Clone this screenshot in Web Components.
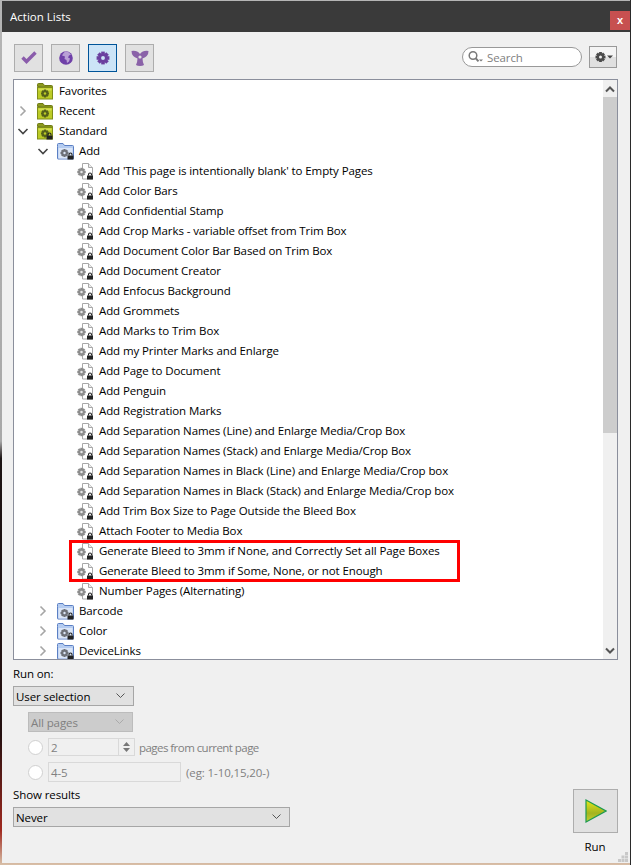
<!DOCTYPE html>
<html>
<head>
<meta charset="utf-8">
<title>Action Lists</title>
<style>
  html, body { margin: 0; height: 865px; overflow: hidden; }
  body {
    font: 11.5px "Open Sans", "Noto Sans", sans-serif;
    letter-spacing: -0.1px;
    background:
      linear-gradient(#2a2a2a, #2a2a2a) right top / 1px 100% no-repeat,
      linear-gradient(#b5b5b5 0, #a8a8a8 51%, #1c1414 53%, #241010 85%, #a02a20 96%, #d8c0a8 100%);
  }
</style>
</head>
<body>
<al-window>
  <al-titlebar slot="title">Action Lists</al-titlebar>
  <al-toolbar slot="toolbar"></al-toolbar>
  <al-tree slot="tree">
    <al-row depth="0" icon="olive">Favorites</al-row>
    <al-row depth="0" icon="olive" arrow="closed">Recent</al-row>
    <al-row depth="0" icon="olive-lock" arrow="open">Standard</al-row>
    <al-row depth="1" icon="blue" arrow="open">Add</al-row>
    <al-row depth="2" icon="page">Add 'This page is intentionally blank' to Empty Pages</al-row>
    <al-row depth="2" icon="page">Add Color Bars</al-row>
    <al-row depth="2" icon="page">Add Confidential Stamp</al-row>
    <al-row depth="2" icon="page">Add Crop Marks - variable offset from Trim Box</al-row>
    <al-row depth="2" icon="page">Add Document Color Bar Based on Trim Box</al-row>
    <al-row depth="2" icon="page">Add Document Creator</al-row>
    <al-row depth="2" icon="page">Add Enfocus Background</al-row>
    <al-row depth="2" icon="page">Add Grommets</al-row>
    <al-row depth="2" icon="page">Add Marks to Trim Box</al-row>
    <al-row depth="2" icon="page">Add my Printer Marks and Enlarge</al-row>
    <al-row depth="2" icon="page">Add Page to Document</al-row>
    <al-row depth="2" icon="page">Add Penguin</al-row>
    <al-row depth="2" icon="page">Add Registration Marks</al-row>
    <al-row depth="2" icon="page">Add Separation Names (Line) and Enlarge Media/Crop Box</al-row>
    <al-row depth="2" icon="page">Add Separation Names (Stack) and Enlarge Media/Crop Box</al-row>
    <al-row depth="2" icon="page">Add Separation Names in Black (Line) and Enlarge Media/Crop box</al-row>
    <al-row depth="2" icon="page">Add Separation Names in Black (Stack) and Enlarge Media/Crop box</al-row>
    <al-row depth="2" icon="page">Add Trim Box Size to Page Outside the Bleed Box</al-row>
    <al-row depth="2" icon="page">Attach Footer to Media Box</al-row>
    <al-highlight>
      <al-row depth="2" icon="page">Generate Bleed to 3mm if None, and Correctly Set all Page Boxes</al-row>
      <al-row depth="2" icon="page">Generate Bleed to 3mm if Some, None, or not Enough</al-row>
    </al-highlight>
    <al-row depth="2" icon="page">Number Pages (Alternating)</al-row>
    <al-row depth="1" icon="blue" arrow="closed">Barcode</al-row>
    <al-row depth="1" icon="blue" arrow="closed">Color</al-row>
    <al-row depth="1" icon="blue" arrow="closed">DeviceLinks</al-row>
  </al-tree>
  <al-runpanel slot="panel">
    <al-select slot="run-on" w="121">User selection</al-select>
    <al-select slot="pages" w="105" disabled>All pages</al-select>
    <al-select slot="results" w="277">Never</al-select>
  </al-runpanel>
</al-window>

<script>
// little svg helpers, <use> does not cross shadow roots so we just build strings
function gear(cx, cy, r, color, hole) {
  let teeth = '';
  for (let i = 0; i < 8; i++) {
    teeth += `<rect x="${cx - r * 0.28}" y="${cy - r}" width="${r * 0.56}" height="${r * 0.5}" fill="${color}" transform="rotate(${i * 45} ${cx} ${cy})"/>`;
  }
  return `${teeth}<circle cx="${cx}" cy="${cy}" r="${r * 0.72}" fill="${color}"/><circle cx="${cx}" cy="${cy}" r="${r * 0.3}" fill="${hole}"/>`;
}
function lock(x, y) {
  return `<path d="M${x + 1.5} ${y + 3}v-1a1.5 1.5 0 0 1 3 0v1" fill="none" stroke="#222" stroke-width="1.100"/><rect x="${x}" y="${y + 3}" width="6" height="4" fill="#222"/>`;
}
function svg(w, h, body) {
  return `<svg xmlns="http://www.w3.org/2000/svg" width="${w}" height="${h}" viewBox="0 0 ${w} ${h}" style="display:block">${body}</svg>`;
}
const chevron = (dir, color) => svg(12, 12, dir === 'open'
  ? `<path d="M1.500 4l4.500 4.500L10.500 4" fill="none" stroke="${color}" stroke-width="1.600"/>`
  : `<path d="M3.500 1.500L8 6l-4.500 4.500" fill="none" stroke="${color}" stroke-width="1.600"/>`);

const oliveFolder = locked => svg(16, 17,
  `<path d="M.5 3.500v-2q0-1 1-1h4.500l1.500 2h7q1 0 1 1v1z" fill="#8c9a1c" stroke="#6e7a14"/>
   <rect x=".5" y="4.500" width="15" height="11.500" fill="#bccb26" stroke="#7f8d18"/>
   <rect x="1.500" y="5.500" width="13" height="2" fill="#d4df52"/>` +
  gear(8, 10.5, 4, '#55601a', '#bccb26') + (locked ? lock(9.5, 9.5) : ''));

const blueFolder = svg(17, 17,
  `<path d="M.5 3.500v-2q0-1 1-1h4.500l1.500 2h8q1 0 1 1v12q0 .5-.5.5H1q-.5 0-.5-.5z" fill="#b5ccf0" stroke="#5a7fc4"/>
   <rect x="1.500" y="5" width="14" height="10.500" fill="#dbe6f8"/>` +
  gear(7.5, 10, 4, '#6d7078', '#dbe6f8') + lock(10.5, 9.5));

const pageIcon = svg(17, 17,
  `<path d="M5.500 .5h6l4 4v11.500h-10z" fill="#fff" stroke="#a8a8a8"/><path d="M11.500 .5v4h4" fill="#eee" stroke="#a8a8a8"/>` +
  gear(4.5, 9, 4.2, '#8c8c8c', '#e8e8e8') + lock(10, 9.5));

const rowIcons = { olive: oliveFolder(false), 'olive-lock': oliveFolder(true), blue: blueFolder, page: pageIcon };

class AlWindow extends HTMLElement {
  constructor() {
    super();
    this.attachShadow({ mode: 'open' }).innerHTML = `
      <style>
        :host { display: flex; flex-direction: column; height: 862px; margin: 1px 1px 2px 2px; background: #f0f0f0; position: relative; }
        .grip { position: absolute; right: 2px; bottom: 1px; }
      </style>
      <slot name="title"></slot>
      <slot name="toolbar"></slot>
      <slot name="tree"></slot>
      <slot name="panel"></slot>
      <div class="grip">${svg(10, 10, '<path d="M7 0h3v3H7zM3.500 3.500h3v3h-3zM7 3.500h3v3H7zM0 7h3v3H0zM3.500 7h3v3h-3zM7 7h3v3H7z" fill="#c8c8c8"/>')}</div>`;
  }
}

class AlTitlebar extends HTMLElement {
  constructor() {
    super();
    this.attachShadow({ mode: 'open' }).innerHTML = `
      <style>
        :host { display: flex; align-items: center; justify-content: space-between; height: 31px; background: #3a3a3a; color: #fff; padding-left: 8px; flex: none; position: relative; letter-spacing: 0; }
        .close { width: 20px; height: 19px; margin: 7px 0 0; background: #c75050; color: #fff; font: bold 11px "Liberation Sans", sans-serif; display: flex; align-items: center; justify-content: center; }
        .text { margin-top: -1px; }
      </style>
      <span class="text"><slot></slot></span>
      <div class="close">x</div>`;
  }
}

class AlToolbar extends HTMLElement {
  constructor() {
    super();
    const check = svg(18, 18, '<path d="M2.500 8.500l4 4 9-9" fill="none" stroke="#8a5cab" stroke-width="3.400"/>');
    const globe = svg(18, 18, `<circle cx="9" cy="9" r="6.800" fill="#6f40a8"/><path d="M9 2.500q3 0 5 3l-2 1-1 2 2 1-1 3-2 1.500-.5-3-2-1 .5-2.500-3-1q2-4 4.500-4.500z" fill="#b9a0d6"/>`);
    const cog = svg(18, 18, gear(9, 9, 6.400, '#6b3f9f', '#cce4f7'));
    const fan = svg(20, 18, '<path d="M1.500 2q5.500-1 8.500 3 3-4 8.500-3 0 5.500-6 7.500 0 3 1.500 6.500-1.500 1-4 1t-4-1q1.500-3.500 1.500-6.500-6-2-6-7.500z" fill="#8a62a8"/><circle cx="10" cy="8" r="1.600" fill="#e1e1e1"/>');
    this.attachShadow({ mode: 'open' }).innerHTML = `
      <style>
        :host { display: flex; align-items: flex-start; height: 47px; box-sizing: border-box; padding: 12px 13px 0 12px; flex: none; }
        .tool { width: 29px; height: 28px; box-sizing: border-box; border: 1px solid #adadad; background: #e1e1e1; display: flex; align-items: center; justify-content: center; margin-right: 8px; }
        .on { background: #cce4f7; border-color: #005499; }
        .search { margin-left: auto; margin-top: 3px; width: 120px; height: 20px; box-sizing: border-box; border: 1px solid #999; border-radius: 10px; background: #fff; display: flex; align-items: center; padding-left: 5px; color: #808080; }
        .search span { margin-left: 4px; }
        .menu { width: 28px; height: 22px; box-sizing: border-box; margin: 2px 0 0 7px; border: 1px solid #999; background: linear-gradient(#f4f4f4 50%, #e0e0e0 50%); display: flex; align-items: center; padding-left: 5px; gap: 1px; }
      </style>
      <div class="tool">${check}</div>
      <div class="tool">${globe}</div>
      <div class="tool on">${cog}</div>
      <div class="tool">${fan}</div>
      <div class="search">
        ${svg(15, 14, '<circle cx="5" cy="5.500" r="3.800" fill="none" stroke="#7a7a7a" stroke-width="1.500"/><path d="M7.800 8.300l2.700 3" stroke="#7a7a7a" stroke-width="2"/><path d="M11 9.500h4l-2 2z" fill="#7a7a7a"/>')}
        <span>Search</span>
      </div>
      <div class="menu">
        ${svg(11, 12, gear(5.5, 6, 5, '#4a4a4a', '#eee'))}
        ${svg(6, 4, '<path d="M0 .5h6l-3 3z" fill="#444"/>')}
      </div>`;
  }
}

class AlTree extends HTMLElement {
  constructor() {
    super();
    this.attachShadow({ mode: 'open' }).innerHTML = `
      <style>
        :host { display: flex; height: 581px; box-sizing: border-box; margin: 0 12px 0 11px; border: 1px solid #8b8f9c; background: #fff; flex: none; }
        .rows { flex: 1; padding-top: 1px; overflow: hidden; min-width: 0; }
        .bar { width: 14px; margin-left: auto; background: #f0f0f0; display: flex; flex-direction: column; flex: none; }
        .btn { height: 17px; display: flex; align-items: center; justify-content: center; flex: none; }
        .thumb { height: 336px; background: #cdcdcd; flex: none; }
        .track { flex: 1; }
      </style>
      <div class="rows"><slot></slot></div>
      <div class="bar">
        <div class="btn">${svg(10, 8, '<path d="M1 6.500l4-4 4 4" fill="none" stroke="#555" stroke-width="2"/>')}</div>
        <div class="thumb"></div>
        <div class="track"></div>
        <div class="btn">${svg(10, 8, '<path d="M1 1.500l4 4 4-4" fill="none" stroke="#555" stroke-width="2"/>')}</div>
      </div>`;
  }
}

class AlRow extends HTMLElement {
  constructor() {
    super();
    this.attachShadow({ mode: 'open' });
  }
  connectedCallback() {
    const depth = +this.getAttribute('depth') || 0;
    const arrow = this.getAttribute('arrow');
    const arrowSvg = arrow ? chevron(arrow, arrow === 'open' ? '#444' : '#a6a6a6') : '';
    this.shadowRoot.innerHTML = `
      <style>
        :host { display: flex; align-items: center; height: 20px; white-space: nowrap; color: #000; }
        .arrow { width: 12px; height: 12px; flex: none; margin-left: ${3 + depth * 20}px; }
        .icon { width: 17px; height: 17px; flex: none; margin-left: 8px; }
        .label { margin-left: 5px; margin-top: -1px; }
      </style>
      <div class="arrow">${arrowSvg}</div>
      <div class="icon">${rowIcons[this.getAttribute('icon')] || ''}</div>
      <span class="label"><slot></slot></span>`;
  }
}

// red marker somebody drew around the two rows
class AlHighlight extends HTMLElement {
  constructor() {
    super();
    this.attachShadow({ mode: 'open' }).innerHTML = `
      <style>
        :host { display: block; position: relative; }
        .box { position: absolute; left: 55px; top: -1px; width: 391px; height: 42px; box-sizing: border-box; border: 3px solid #f00; pointer-events: none; }
      </style>
      <slot></slot>
      <div class="box"></div>`;
  }
}

class AlSelect extends HTMLElement {
  constructor() {
    super();
    this.attachShadow({ mode: 'open' });
  }
  connectedCallback() {
    const off = this.hasAttribute('disabled');
    this.shadowRoot.innerHTML = `
      <style>
        :host { display: flex; align-items: center; width: ${this.getAttribute('w')}px; height: 20px; box-sizing: border-box; padding: 0 8px 0 2px; border: 1px solid ${off ? '#bcbcbc' : '#a6a6a6'}; background: ${off ? '#cccccc' : '#e1e1e1'}; color: ${off ? '#808080' : '#000'}; }
        span { flex: 1; }
      </style>
      <span><slot></slot></span>
      ${svg(9, 6, `<path d="M.5 .5l4 4 4-4" fill="none" stroke="${off ? '#aaa' : '#555'}" stroke-width="1"/>`)}`;
  }
}

class AlRunpanel extends HTMLElement {
  constructor() {
    super();
    this.attachShadow({ mode: 'open' }).innerHTML = `
      <style>
        :host { display: flex; flex: 1; justify-content: space-between; padding: 6px 12px 0 11px; color: #000; min-height: 0; }
        .left { display: flex; flex-direction: column; }
        .label { height: 16px; line-height: 16px; }
        .pages { padding-left: 15px; display: flex; flex-direction: column; }
        .line { display: flex; align-items: center; color: #808080; margin-top: 6px; }
        .tight { letter-spacing: -0.55px; margin-left: -1px; }
        .radio { width: 13px; height: 13px; border: 1px solid #d0d0d0; border-radius: 50%; background: #fff; flex: none; margin-right: 5px; }
        .input { box-sizing: border-box; border: 1px solid #d9d9d9; background: #f0f0f0; display: flex; align-items: center; padding-left: 2px; margin-right: 5px; }
        .spin { width: 87px; height: 18px; position: relative; }
        .spin i { position: absolute; right: 0; top: 0; bottom: 0; width: 15px; border-left: 1px solid #d9d9d9; display: flex; flex-direction: column; align-items: center; justify-content: center; gap: 2px; }
        .run { display: flex; flex-direction: column; align-items: center; margin-top: 123px; }
        .runbtn { width: 45px; height: 44px; box-sizing: border-box; border: 1px solid #adadad; background: #e1e1e1; display: flex; align-items: center; justify-content: center; }
        .run span { margin-top: 6px; margin-left: -1px; }
      </style>
      <div class="left">
        <div class="label">Run on:</div>
        <div style="margin-top:4px"><slot name="run-on"></slot></div>
        <div class="pages">
          <div style="margin-top:6px"><slot name="pages"></slot></div>
          <div class="line">
            <div class="radio"></div>
            <div class="input spin">2<i>
              ${svg(7, 4, '<path d="M3.500 0l3.500 4H0z" fill="#777"/>')}
              ${svg(7, 4, '<path d="M3.500 4L7 0H0z" fill="#777"/>')}
            </i></div>
            <span class="tight">pages from current page</span>
          </div>
          <div class="line">
            <div class="radio"></div>
            <div class="input" style="width:133px;height:20px">4-5</div>
            <span>(eg: 1-10,15,20-)</span>
          </div>
        </div>
        <div class="label" style="margin-top:5px">Show results</div>
        <div style="margin-top:4px"><slot name="results"></slot></div>
      </div>
      <div class="run">
        <div class="runbtn">
          ${svg(22, 24, `<defs><linearGradient id="g" x1="0" y1="0" x2="0" y2="1"><stop offset="0" stop-color="#e4e81a"/><stop offset=".6" stop-color="#a3b41e"/><stop offset="1" stop-color="#c4d030"/></linearGradient></defs><path d="M1 1l20 11L1 23z" fill="url(#g)" stroke="#1d9a50" stroke-width="1.200"/>`)}
        </div>
        <span>Run</span>
      </div>`;
  }
}

customElements.define('al-window', AlWindow);
customElements.define('al-titlebar', AlTitlebar);
customElements.define('al-toolbar', AlToolbar);
customElements.define('al-tree', AlTree);
customElements.define('al-row', AlRow);
customElements.define('al-highlight', AlHighlight);
customElements.define('al-select', AlSelect);
customElements.define('al-runpanel', AlRunpanel);
</script>
</body>
</html>
